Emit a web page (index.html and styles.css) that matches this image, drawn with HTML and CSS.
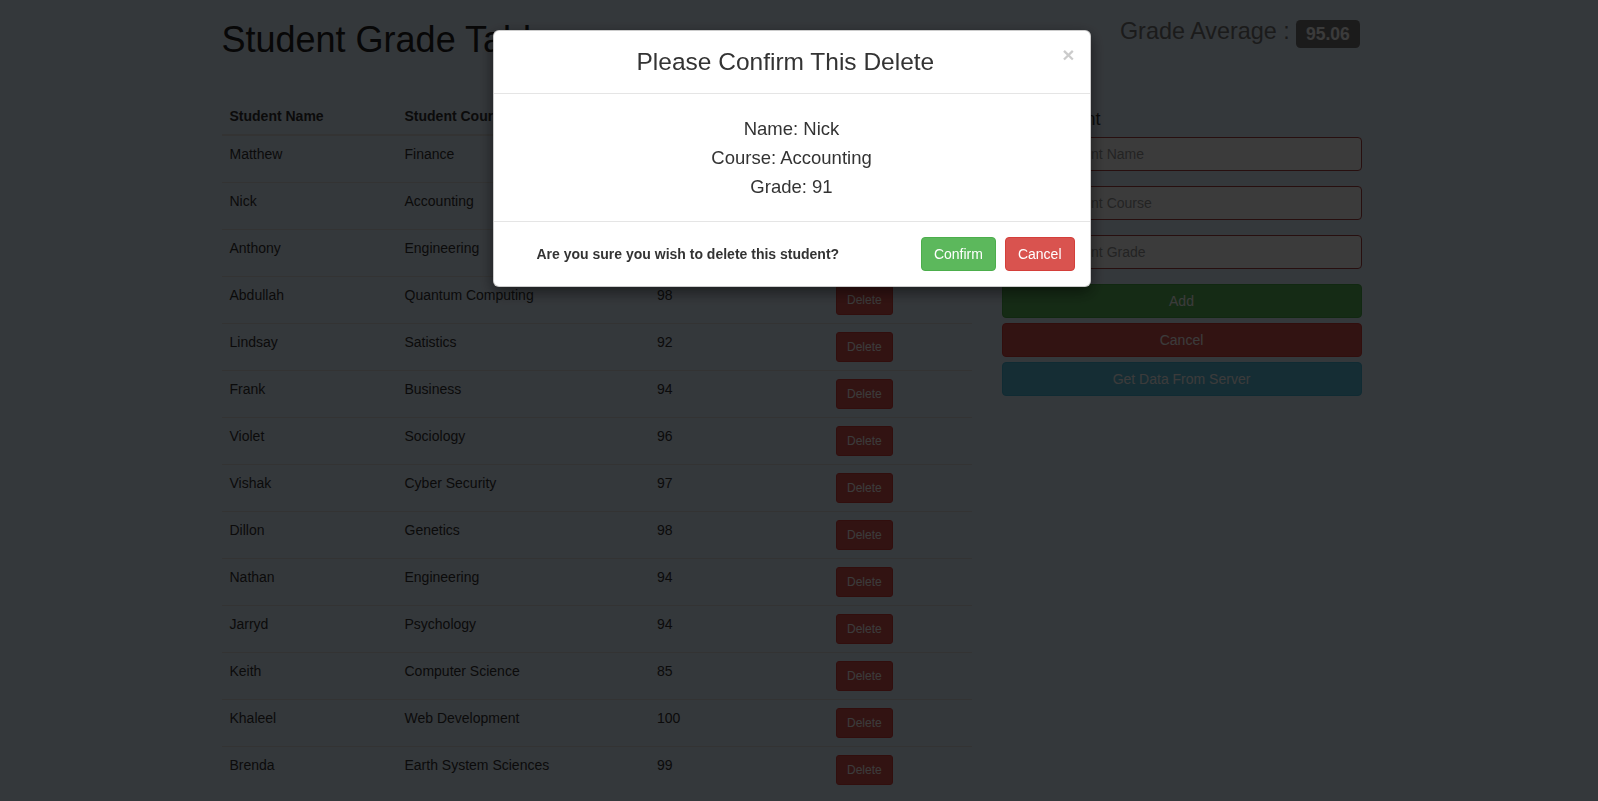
FILE: index.html
```html
<!DOCTYPE html>
<html lang="en">
<head>
<meta charset="utf-8">
<title>Student Grade Table</title>
<link rel="stylesheet" href="styles.css">
</head>
<body>
<div class="container">
  <div class="page-header">
    <h1 class="title">Student Grade Table</h1>
    <div class="avg">Grade Average : <span class="label">95.06</span></div>
  </div>
  <div class="row">
    <div class="col-table">
      <table class="table">
        <thead>
          <tr>
            <th class="c-name">Student Name</th>
            <th class="c-course">Student Course</th>
            <th class="c-grade">Student Grade</th>
            <th class="c-ops">Operations</th>
          </tr>
        </thead>
        <tbody>
          <tr><td>Matthew</td><td>Finance</td><td>95</td><td><button class="btn-sm">Delete</button></td></tr>
          <tr><td>Nick</td><td>Accounting</td><td>91</td><td><button class="btn-sm">Delete</button></td></tr>
          <tr><td>Anthony</td><td>Engineering</td><td>96</td><td><button class="btn-sm">Delete</button></td></tr>
          <tr><td>Abdullah</td><td>Quantum Computing</td><td>98</td><td><button class="btn-sm">Delete</button></td></tr>
          <tr><td>Lindsay</td><td>Satistics</td><td>92</td><td><button class="btn-sm">Delete</button></td></tr>
          <tr><td>Frank</td><td>Business</td><td>94</td><td><button class="btn-sm">Delete</button></td></tr>
          <tr><td>Violet</td><td>Sociology</td><td>96</td><td><button class="btn-sm">Delete</button></td></tr>
          <tr><td>Vishak</td><td>Cyber Security</td><td>97</td><td><button class="btn-sm">Delete</button></td></tr>
          <tr><td>Dillon</td><td>Genetics</td><td>98</td><td><button class="btn-sm">Delete</button></td></tr>
          <tr><td>Nathan</td><td>Engineering</td><td>94</td><td><button class="btn-sm">Delete</button></td></tr>
          <tr><td>Jarryd</td><td>Psychology</td><td>94</td><td><button class="btn-sm">Delete</button></td></tr>
          <tr><td>Keith</td><td>Computer Science</td><td>85</td><td><button class="btn-sm">Delete</button></td></tr>
          <tr><td>Khaleel</td><td>Web Development</td><td>100</td><td><button class="btn-sm">Delete</button></td></tr>
          <tr><td>Brenda</td><td>Earth System Sciences</td><td>99</td><td><button class="btn-sm">Delete</button></td></tr>
        </tbody>
      </table>
    </div>
    <div class="col-side">
      <h4 class="side-title">Add Student</h4>
      <div class="input-group">
        <span class="addon"><svg width="14" height="14" viewBox="0 0 14 14"><circle cx="7" cy="4" r="3" fill="#a94442"/><path d="M1 13c0-3.5 2.7-5 6-5s6 1.5 6 5z" fill="#a94442"/></svg></span>
        <input class="form-control" type="text" placeholder="Student Name">
      </div>
      <div class="input-group">
        <span class="addon"><svg width="14" height="14" viewBox="0 0 14 14"><path d="M2 2h8a2 2 0 0 1 2 2v9H4a2 2 0 0 1-2-2z" fill="#a94442"/></svg></span>
        <input class="form-control" type="text" placeholder="Student Course">
      </div>
      <div class="input-group">
        <span class="addon"><svg width="14" height="14" viewBox="0 0 14 14"><path d="M2 2h10v10H2z" fill="#a94442"/></svg></span>
        <input class="form-control" type="text" placeholder="Student Grade">
      </div>
      <button class="btn btn-block btn-success">Add</button>
      <button class="btn btn-block btn-danger">Cancel</button>
      <button class="btn btn-block btn-info">Get Data From Server</button>
    </div>
  </div>
</div>

<div class="backdrop"></div>
<div class="modal">
  <div class="modal-dialog">
    <div class="modal-content">
      <div class="modal-header">
        <h4 class="modal-title">Please Confirm This Delete</h4>
        <button class="close" type="button">&times;</button>
      </div>
      <div class="modal-body">
        <h4 class="detail">Name: Nick</h4>
        <h4 class="detail">Course: Accounting</h4>
        <h4 class="detail">Grade: 91</h4>
      </div>
      <div class="modal-footer">
        <span class="footer-text">Are you sure you wish to delete this student?</span>
        <button class="btn btn-success">Confirm</button>
        <button class="btn btn-danger btn-gap">Cancel</button>
      </div>
    </div>
  </div>
</div>
</body>
</html>
```

FILE: styles.css
```css
* { box-sizing: border-box; }

html, body { margin: 0; }

body {
  font-family: "Liberation Sans", Arial, sans-serif;
  font-size: 14px;
  line-height: 20px;
  color: #333;
  background: #e2effc;
  padding-right: 15px;
  height: 801px;
  overflow: hidden;
}

.container {
  width: 1170px;
  margin: 0 auto;
  padding: 0 15px;
}

.page-header {
  display: flex;
  justify-content: space-between;
  align-items: flex-start;
}

.title {
  font-size: 36px;
  line-height: 40px;
  font-weight: 500;
  margin: 20px 0 38px;
  color: #222;
}

.avg {
  font-size: 23.4px;
  line-height: 26px;
  color: #777;
  margin-top: 18px;
  margin-right: 2px;
}

.label {
  display: inline;
  padding: .2em .55em .3em;
  font-size: 75%;
  font-weight: 700;
  line-height: 1;
  color: #fff;
  background: #777;
  border-radius: .25em;
}

.row {
  display: flex;
  gap: 30px;
}

.col-table { width: 750px; }
.col-side { width: 360px; }

.table {
  width: 100%;
  border-collapse: collapse;
  border-spacing: 0;
}

.table th,
.table td {
  padding: 8px;
  text-align: left;
  vertical-align: top;
  line-height: 20px;
  border-top: 1px solid #ddd;
}

.table thead th {
  border-top: 0;
  border-bottom: 2px solid #ddd;
  font-weight: bold;
}

.c-name { width: 175px; }
.c-course { width: 252.5px; }
.c-grade { width: 179px; }

.btn-sm {
  display: inline-block;
  font-family: inherit;
  font-size: 12px;
  line-height: 18px;
  padding: 5px 10px;
  border-radius: 3px;
  color: #fff;
  background: #d9534f;
  border: 1px solid #d43f3a;
}

.side-title {
  font-size: 18px;
  line-height: 20px;
  font-weight: 500;
  margin: 11px 0 8px;
}

.input-group {
  display: flex;
  height: 34px;
  margin-bottom: 15px;
}

.addon {
  width: 40px;
  display: flex;
  align-items: center;
  justify-content: center;
  background: #f2dede;
  border: 1px solid #a94442;
  border-right: 0;
  border-radius: 4px 0 0 4px;
}

.form-control {
  flex: 1;
  height: 34px;
  padding: 6px 12px;
  font-family: inherit;
  font-size: 14px;
  line-height: 20px;
  color: #555;
  background: #fff;
  border: 1px solid #a94442;
  border-radius: 0 4px 4px 0;
}

.form-control::placeholder { color: #999; }

.btn {
  display: inline-block;
  font-family: inherit;
  font-size: 14px;
  line-height: 20px;
  padding: 6px 12px;
  border-radius: 4px;
  border: 1px solid transparent;
  color: #fff;
  text-align: center;
}

.btn-block {
  display: block;
  width: 100%;
  margin-bottom: 5px;
}

.btn-success { background: #5cb85c; border-color: #4cae4c; }
.btn-danger { background: #d9534f; border-color: #d43f3a; }
.btn-info { background: #5bc0de; border-color: #46b8da; }

.backdrop {
  position: fixed;
  inset: 0;
  background: rgba(0, 0, 0, .77);
}

.modal {
  position: fixed;
  inset: 0;
  padding-right: 15px;
}

.modal-dialog {
  width: 598px;
  margin: 30px auto;
}

.modal-content {
  background: #fff;
  border: 1px solid rgba(0, 0, 0, .2);
  border-radius: 6px;
  box-shadow: 0 5px 15px rgba(0, 0, 0, .5);
}

.modal-header {
  display: flex;
  align-items: flex-start;
  padding: 15px;
  border-bottom: 1px solid #e5e5e5;
}

.modal-title {
  flex: 1;
  margin: 0;
  text-align: center;
  font-size: 24.5px;
  line-height: 32px;
  font-weight: 500;
  color: #333;
}

.close {
  margin-top: -2px;
  padding: 0;
  background: none;
  border: 0;
  font-family: inherit;
  font-size: 21px;
  font-weight: bold;
  line-height: 1;
  color: #000;
  opacity: .2;
  text-shadow: 0 1px 0 #fff;
}

.modal-body {
  padding: 15px;
  text-align: center;
}

.detail {
  font-size: 18.5px;
  line-height: 19px;
  font-weight: 500;
  margin: 10px 0;
  color: #333;
}

.modal-footer {
  display: flex;
  align-items: center;
  padding: 15px;
  border-top: 1px solid #e5e5e5;
}

.footer-text {
  flex: 1;
  margin-left: 28px;
  font-weight: bold;
}

.btn-gap { margin-left: 9px; }
```
